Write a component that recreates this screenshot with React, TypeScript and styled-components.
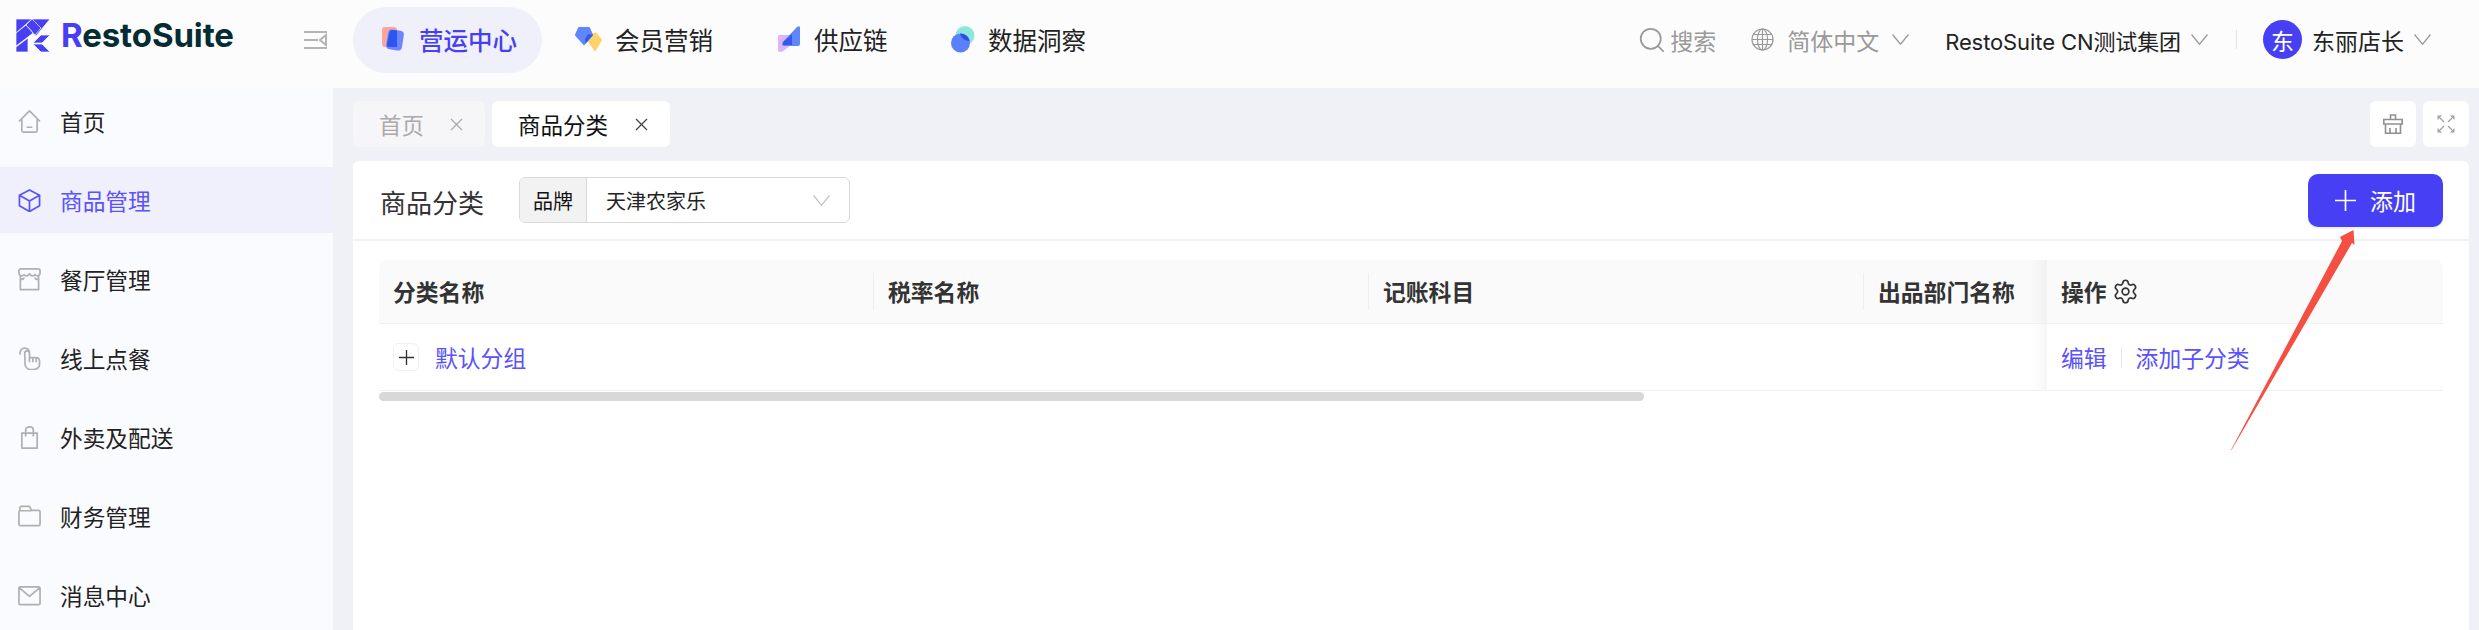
import React from "react";
import styled, { createGlobalStyle } from "styled-components";
import { Search, Settings } from "lucide-react";

const Global = createGlobalStyle`
  html, body { margin: 0; padding: 0; background: #f0f1f6; }
  * { box-sizing: border-box; }
  #root { height: 630px; overflow: hidden; }
  body { font-family: Inter, "Noto Sans CJK SC", "Noto Sans", sans-serif; color: #222; }
`;

const Page = styled.div`
  position: relative;
  width: 2479px;
  height: 630px;
  overflow: hidden;
  display: flex;
  flex-direction: column;
`;
const TopBar = styled.header`
  height: 88px;
  flex: none;
  background: #fcfcfd;
  display: flex;
  align-items: center;
  padding: 0 48px 9px 0;
`;
const Brand = styled.div`
  display: flex;
  align-items: center;
  width: 304px;
  padding-left: 16px;
  gap: 11px;
  margin-top: -8px;
`;
const BrandName = styled.div`
  font-family: Inter, sans-serif;
  font-weight: 700;
  font-size: 33px;
  letter-spacing: -0.1px;
  color: #052c33;
  line-height: 1;
  span { color: #473ff4; }
`;
const Collapse = styled.svg`
  width: 23px;
  height: 20px;
  margin-right: 26px;
  flex: none;
`;
const Nav = styled.nav`
  display: flex;
  align-items: center;
`;
const NavItem = styled.div<{ $active?: boolean; $width: number; $after?: number }>`
  width: ${(p) => p.$width}px;
  height: 66px;
  margin-right: ${(p) => p.$after ?? 0}px;
  display: flex;
  align-items: center;
  gap: 13px;
  padding-left: ${(p) => (p.$active ? 29 : 0)}px;
  border-radius: 33px;
  background: ${(p) => (p.$active ? "#f0f0fb" : "transparent")};
  color: ${(p) => (p.$active ? "#473ff4" : "#222")};
  font-size: 24.5px;
  font-weight: ${(p) => (p.$active ? 500 : 400)};
  white-space: nowrap;
  svg { flex: none; }
`;
const Right = styled.div`
  margin-left: auto;
  display: flex;
  align-items: center;
  font-size: 23px;
`;
const Muted = styled.div<{ $gap: number; $ml?: number }>`
  display: flex;
  align-items: center;
  gap: ${(p) => p.$gap}px;
  margin-left: ${(p) => p.$ml ?? 0}px;
  color: #999;
  white-space: nowrap;
`;
const Dark = styled(Muted)`
  color: #222;
`;
const Org = styled.span`
  font-size: 22px;
  letter-spacing: -0.1px;
`;
const Divider = styled.div`
  width: 1px;
  height: 19px;
  background: #e4e4e8;
  margin: 0 26px 0 28px;
`;
const Avatar = styled.div`
  width: 39px;
  height: 39px;
  border-radius: 50%;
  background: #473ff4;
  color: #fff;
  display: flex;
  align-items: center;
  justify-content: center;
  font-size: 23px;
`;
const Body = styled.div`
  flex: 1;
  display: flex;
  min-height: 0;
`;
const Sidebar = styled.aside`
  width: 333px;
  flex: none;
  background: #fafbfe;
  display: flex;
  flex-direction: column;
  gap: 13px;
`;
const SideItem = styled.div<{ $active?: boolean }>`
  height: 66px;
  flex: none;
  display: flex;
  align-items: center;
  gap: 19px;
  padding: 0 0 0 18px;
  font-size: 22.7px;
  background: ${(p) => (p.$active ? "#f0f0fc" : "transparent")};
  color: ${(p) => (p.$active ? "#5a52fa" : "#222")};
  svg { flex: none; color: ${(p) => (p.$active ? "#5a52fa" : "#b0b0b0")}; }
`;
const Content = styled.main`
  flex: 1;
  min-width: 0;
  padding: 13px 10px 0 20px;
  display: flex;
  flex-direction: column;
  gap: 14px;
`;
const Tabs = styled.div`
  height: 46px;
  flex: none;
  display: flex;
  gap: 7px;
`;
const Tab = styled.div<{ $active?: boolean; $width: number }>`
  width: ${(p) => p.$width}px;
  display: flex;
  align-items: center;
  justify-content: space-between;
  padding: 0 22px 0 26px;
  border-radius: 6px;
  background: ${(p) => (p.$active ? "#fff" : "#f6f6f9")};
  color: ${(p) => (p.$active ? "#111" : "#aaa")};
  font-size: 22.5px;
`;
const SquareBtn = styled.div<{ $first?: boolean }>`
  width: 46px;
  display: flex;
  align-items: center;
  justify-content: center;
  background: #fff;
  border-radius: 6px;
  margin-left: ${(p) => (p.$first ? "auto" : "0")};
`;
const Card = styled.section`
  flex: 1;
  background: #fff;
  border-radius: 6px 6px 0 0;
  min-height: 0;
`;
const CardHead = styled.div`
  height: 80px;
  display: flex;
  align-items: center;
  padding: 0 26px 0 27px;
  border-bottom: 2px solid #f1f2f5;
`;
const Title = styled.h1`
  margin: 2px 0 0;
  font-size: 26px;
  font-weight: 400;
  color: #333;
  width: 139px;
`;
const Select = styled.div`
  width: 331px;
  height: 46px;
  border: 1px solid #d9d9d9;
  border-radius: 6px;
  display: flex;
  align-items: center;
  font-size: 20px;
  overflow: hidden;
`;
const Addon = styled.div`
  width: 67px;
  height: 100%;
  background: #f2f2f2;
  border-right: 1px solid #d9d9d9;
  display: flex;
  align-items: center;
  justify-content: center;
  color: #111;
`;
const SelectValue = styled.div`
  flex: 1;
  padding-left: 19px;
  color: #222;
`;
const SelectArrow = styled.div`
  padding-right: 19px;
  display: flex;
`;
const AddBtn = styled.button`
  margin: 0 0 0 auto;
  width: 135px;
  height: 53px;
  border: 0;
  border-radius: 10px;
  background: #473ff4;
  color: #fff;
  font: inherit;
  font-size: 23px;
  display: flex;
  align-items: center;
  justify-content: center;
  gap: 14px;
  box-shadow: 0 2px 0 rgba(71, 63, 244, 0.08);
`;
const TableWrap = styled.div`
  padding: 19px 26px 0;
`;
const Columns = "494px 495px 495px 184px 396px";
const HeadRow = styled.div`
  display: grid;
  grid-template-columns: ${Columns};
  height: 64px;
  background: #fafafa;
  border-bottom: 1px solid #f0f0f0;
  border-radius: 8px 8px 0 0;
`;
const HeadCell = styled.div<{ $sep?: boolean }>`
  position: relative;
  display: flex;
  align-items: center;
  gap: 7px;
  padding-left: ${(p) => (p.$sep ? 15 : 14)}px;
  font-size: 22.8px;
  font-weight: 700;
  color: #333;
  white-space: nowrap;
  ${(p) =>
    p.$sep &&
    `&::before { content: ""; position: absolute; left: 0; top: 13px; height: 37px; width: 1px; background: #eeeeee; }`}
`;
const FixedCell = styled.div`
  position: relative;
  display: flex;
  align-items: center;
  padding-left: 14px;
  gap: 7px;
  &::before {
    content: "";
    position: absolute;
    left: -16px;
    top: 0;
    bottom: 0;
    width: 16px;
    background: linear-gradient(to right, rgba(0, 0, 0, 0), rgba(0, 0, 0, 0.035));
  }
`;
const FixedHead = styled(FixedCell)`
  font-size: 22.8px;
  font-weight: 700;
  color: #333;
  gap: 5px;
`;
const DataRow = styled.div`
  display: grid;
  grid-template-columns: ${Columns};
  height: 67px;
  border-bottom: 1px solid #f0f0f0;
`;
const GroupCell = styled.div`
  grid-column: 1 / span 4;
  display: flex;
  align-items: center;
  padding-left: 14px;
  gap: 16px;
`;
const Expand = styled.div`
  width: 26px;
  height: 28px;
  border: 1px solid #f0f0f0;
  border-radius: 6px;
  display: flex;
  align-items: center;
  justify-content: center;
`;
const Link = styled.span`
  color: #5a52fa;
  font-size: 22.8px;
`;
const LinkSep = styled.span`
  width: 1px;
  height: 21px;
  background: #e8e8e8;
  margin: 0 7px;
`;
const ScrollBar = styled.div`
  width: 1265px;
  height: 9px;
  border-radius: 5px;
  background: #d8d8d8;
  margin-top: 1px;
`;
const ArrowSvg = styled.svg`
  position: absolute;
  left: 2220px;
  top: 220px;
  pointer-events: none;
`;

const Chevron = ({ w = 17, h = 11, c = "#999" }: { w?: number; h?: number; c?: string }) => (
  <svg width={w} height={h} viewBox="0 0 16 10" preserveAspectRatio="none" fill="none">
    <path d="M0.5 0.5 L8 9.3 L15.5 0.5" stroke={c} strokeWidth="1.2" />
  </svg>
);
const Close = ({ c }: { c: string }) => (
  <svg width="13" height="13" viewBox="0 0 13 13" fill="none">
    <path d="M1 1 L12 12 M12 1 L1 12" stroke={c} strokeWidth="1.3" />
  </svg>
);
const Plus = ({ s, c, w = 1.6 }: { s: number; c: string; w?: number }) => (
  <svg width={s} height={s} viewBox="0 0 20 20" fill="none">
    <path d="M10 0 V20 M0 10 H20" stroke={c} strokeWidth={w} />
  </svg>
);

const Logo = () => (
  <svg width="34" height="33" viewBox="0 0 34 33" fill="#473ff4" stroke="#fcfcfd" strokeWidth="0.7">
    <polygon points="0,0 16,0 0,14" />
    <polygon points="16,0 34,0 20,17 16,14" />
    <polygon points="16,0 25,9 19,16 10,6" />
    <polygon points="0,14 10,6 17,14 12,18 0,27" />
    <polygon points="0,28 12,19 12,33 0,33" />
    <polygon points="17,24 25,16 34,16 26,24" />
    <polygon points="17,25 26,25 34,33 25,33" />
  </svg>
);
const IconOps = () => (
  <svg width="24" height="26" viewBox="0 0 24 26">
    <rect x="0" y="0" width="15" height="20" rx="3" fill="#fda59d" />
    <g transform="rotate(9 13 13)">
      <rect x="5" y="3" width="16" height="20" rx="4" fill="#6f86fb" />
    </g>
    <path d="M7.5 5 Q8 2.6 11 3 L15 3.6 V20 L7 20 Q4.5 19.5 5 17 Z" fill="#2c57ee" />
  </svg>
);
const IconMember = () => (
  <svg width="27" height="26" viewBox="0 0 27 26">
    <polygon points="15,8 21,6.5 26,13 20,23 13,13" fill="#fdd36a" stroke="#fdd36a" strokeWidth="2" strokeLinejoin="round" />
    <polygon points="4,1 14,1 17,8 9,17 1,8" fill="#5f86fb" stroke="#5f86fb" strokeWidth="2" strokeLinejoin="round" />
    <polygon points="13,7 18,8 10.5,16.5 10,12" fill="#3558ee" />
  </svg>
);
const IconSupply = () => (
  <svg width="23" height="27" viewBox="0 0 23 27">
    <path d="M2 9 H14 L14 18 Q6 25 3 26 Q0 26 0 24 V11 Q0 9 2 9 Z" fill="#dcb4fa" />
    <path d="M19 1 Q22 -1 22 2 V18 Q22 20 20 20 H6 Q3 20 5 16 Z" fill="#5f86fb" />
    <path d="M14 8 V19 H6 Q4 19 5 16 Z" fill="#3558ee" />
  </svg>
);
const IconData = () => (
  <svg width="24" height="27" viewBox="0 0 24 27">
    <circle cx="14" cy="9.5" r="9.5" fill="#8de8dc" />
    <circle cx="9.5" cy="17" r="9.5" fill="#5c7ffb" />
    <path d="M9 7.5 A9.5 9.5 0 0 1 18.8 15 A9.5 9.5 0 0 1 9 7.5 Z" fill="#2c4fe6" />
  </svg>
);
const Globe = () => (
  <svg width="23" height="23" viewBox="0 0 23 23" fill="none" stroke="#999" strokeWidth="1.2">
    <circle cx="11.5" cy="11.5" r="10.5" />
    <ellipse cx="11.5" cy="11.5" rx="5" ry="10.5" />
    <path d="M11.5 1 V22 M1 11.5 H22 M2.5 6.5 H20.5 M2.5 16.5 H20.5" />
  </svg>
);
const Brush = () => (
  <svg width="20" height="20" viewBox="0 0 20 20" fill="none" stroke="#909090" strokeWidth="1.6">
    <path d="M7.5 5.5 V1 H12.5 V5.5 M0.8 5.5 H19.2 V10 H0.8 Z M2.5 10 V19.2 H17.5 V10 M7 14 V19.2 M13 14 V19.2" />
  </svg>
);
const Fullscreen = () => (
  <svg width="18" height="18" viewBox="0 0 18 18" fill="#a0a0a0" stroke="#a0a0a0" strokeWidth="1.3">
    <path d="M3 3 L7 7 M15 3 L11 7 M3 15 L7 11 M15 15 L11 11" />
    <path d="M0.5 0.5 H5 L0.5 5 Z M17.5 0.5 H13 L17.5 5 Z M0.5 17.5 H5 L0.5 13 Z M17.5 17.5 H13 L17.5 13 Z" stroke="none" />
  </svg>
);

const side = { width: 23, height: 23, viewBox: "0 0 24 24", fill: "none", stroke: "currentColor", strokeWidth: 1.8, strokeLinejoin: "round" as const };
const HomeI = () => (
  <svg {...side}><path d="M1 12 L12 1 L23 12 M4 9.5 V21.5 Q4 23 5.5 23 H18.5 Q20 23 20 21.5 V9.5 M9 18 H15" /></svg>
);
const BoxI = () => (
  <svg {...side}><path d="M12 1 L22.5 6.5 V17.5 L12 23.5 L1.5 17.5 V6.5 Z M1.5 6.5 L12 12.5 L22.5 6.5 M12 12.5 V23.5" /></svg>
);
const StoreI = () => (
  <svg {...side}><path d="M3 1 H21 Q23 1 23 3 V6 Q21 10 17.5 7 Q15 10 12 6 Q9 10 6.5 7 Q3 10 1 6 V3 Q1 1 3 1 Z M2.5 8 V22.5 H21.5 V8 M2.5 12 Q6 12 6.5 10 M21.5 12 Q18 12 17.5 10" /></svg>
);
const HandI = () => (
  <svg {...side}><path d="M2.5 8 A5 5 0 1 1 12 5 M7 7 Q7 4 9.5 4 Q12 4 12 7 V11 H19 Q22.5 11 22.5 15 V17 Q22.5 23.5 16 23.5 H13 Q9 23.5 7.5 19 Z M12 11 V16 M15.5 11 V16 M19 11 V16" /></svg>
);
const BagI = () => (
  <svg {...side}><path d="M4 7.5 H20 V23 H4 Z M8 11 V4.5 Q8 1 12 1 Q16 1 16 4.5 V11" /></svg>
);
const FolderI = () => (
  <svg {...side}><path d="M2 6 V3 Q2 1.5 3.5 1.5 H12 L14 5.5 H21.5 Q23 5.5 23 7 V20 Q23 21.5 21.5 21.5 H2.5 Q1 21.5 1 20 V7 Q1 6 2 6 H14" /></svg>
);
const MailI = () => (
  <svg {...side}><path d="M2.5 3 H21.5 Q23 3 23 4.5 V20 Q23 21.5 21.5 21.5 H2.5 Q1 21.5 1 20 V4.5 Q1 3 2.5 3 Z M1.5 4 L12 13 L22.5 4" /></svg>
);

const sideItems: { label: string; icon: React.ReactNode; active?: boolean }[] = [
  { label: "首页", icon: <HomeI /> },
  { label: "商品管理", icon: <BoxI />, active: true },
  { label: "餐厅管理", icon: <StoreI /> },
  { label: "线上点餐", icon: <HandI /> },
  { label: "外卖及配送", icon: <BagI /> },
  { label: "财务管理", icon: <FolderI /> },
  { label: "消息中心", icon: <MailI /> },
];

export default function App() {
  return (
    <Page>
      <Global />
      <TopBar>
        <Brand>
          <Logo />
          <BrandName><span>R</span>estoSuite</BrandName>
        </Brand>
        <Collapse viewBox="0 0 23 20" fill="none" stroke="#b4b4b4" strokeWidth="2">
          <path d="M0 2 H23 M0 18 H23 M0 10 H14 M22 5 L16 10 L22 15 Z" />
        </Collapse>
        <Nav>
          <NavItem $active $width={189} $after={33}><IconOps /><span>营运中心</span></NavItem>
          <NavItem $width={203}><IconMember /><span>会员营销</span></NavItem>
          <NavItem $width={173}><IconSupply /><span>供应链</span></NavItem>
          <NavItem $width={200}><IconData /><span>数据洞察</span></NavItem>
        </Nav>
        <Right>
          <Muted $gap={3}><Search size={30} strokeWidth={1.4} color="#999" /><span>搜索</span></Muted>
          <Muted $gap={13} $ml={35}><Globe /><span>简体中文</span><Chevron /></Muted>
          <Dark $gap={10} $ml={36}><Org>RestoSuite CN测试集团</Org><Chevron /></Dark>
          <Divider />
          <Dark $gap={10}><Avatar>东</Avatar><span>东丽店长</span><Chevron /></Dark>
        </Right>
      </TopBar>
      <Body>
        <Sidebar>
          {sideItems.map((it) => (
            <SideItem key={it.label} $active={it.active}>
              {it.icon}
              <span>{it.label}</span>
            </SideItem>
          ))}
        </Sidebar>
        <Content>
          <Tabs>
            <Tab $width={132}><span>首页</span><Close c="#aaa" /></Tab>
            <Tab $active $width={178}><span>商品分类</span><Close c="#444" /></Tab>
            <SquareBtn $first><Brush /></SquareBtn>
            <SquareBtn><Fullscreen /></SquareBtn>
          </Tabs>
          <Card>
            <CardHead>
              <Title>商品分类</Title>
              <Select>
                <Addon>品牌</Addon>
                <SelectValue>天津农家乐</SelectValue>
                <SelectArrow><Chevron c="#c4c4c4" /></SelectArrow>
              </Select>
              <AddBtn><Plus s={21} c="#fff" /><span>添加</span></AddBtn>
            </CardHead>
            <TableWrap>
              <HeadRow>
                <HeadCell>分类名称</HeadCell>
                <HeadCell $sep>税率名称</HeadCell>
                <HeadCell $sep>记账科目</HeadCell>
                <HeadCell $sep>出品部门名称</HeadCell>
                <FixedHead>操作<Settings size={27} strokeWidth={1.5} color="#333" /></FixedHead>
              </HeadRow>
              <DataRow>
                <GroupCell>
                  <Expand><Plus s={15} c="#333" w={1.8} /></Expand>
                  <Link>默认分组</Link>
                </GroupCell>
                <FixedCell>
                  <Link>编辑</Link>
                  <LinkSep />
                  <Link>添加子分类</Link>
                </FixedCell>
              </DataRow>
              <ScrollBar />
            </TableWrap>
          </Card>
        </Content>
      </Body>
      <ArrowSvg width="150" height="240" viewBox="2220 220 150 240">
        <polygon points="2353.5,230 2354.5,245 2352,243 2231.5,450 2231,450 2342,241 2340,237" fill="#f44f42" />
      </ArrowSvg>
    </Page>
  );
}
